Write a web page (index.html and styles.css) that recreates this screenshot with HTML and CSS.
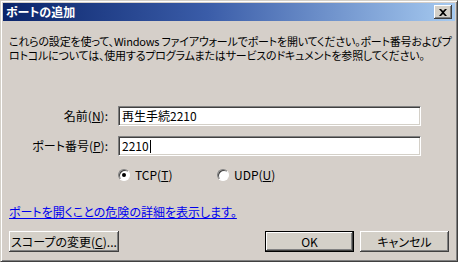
FILE: index.html
```html
<!DOCTYPE html>
<html lang="ja">
<head>
    <meta charset="UTF-8">
    <title>ポートの追加</title>
    <link rel="stylesheet" href="styles.css">
</head>
<body>
    <div class="window">
        <div class="titlebar">
            <span class="title">ポートの追加</span>
            <button class="close-btn" aria-label="閉じる">
                <svg width="8" height="7" viewBox="0 0 8 7"><path d="M0 0h2l2 2 2-2h2L5 3.5 8 7H6L4 5 2 7H0l3-3.5z" fill="#000"/></svg>
            </button>
        </div>

        <div class="content">
            <p class="intro">これらの設定を使って、Windows ファイアウォールでポートを開いてください。ポート番号およびプ<br>ロトコルについては、使用するプログラムまたはサービスのドキュメントを参照してください。</p>

            <div class="form">
                <label class="field-label" for="name">名前(<u>N</u>):</label>
                <div class="textbox" id="name">再生手続2210</div>
                <label class="field-label" for="port">ポート番号(<u>P</u>):</label>
                <div class="textbox" id="port">2210<span class="caret"></span></div>
            </div>

            <div class="protocols">
                <label class="radio"><span class="dot checked"></span>TCP(<u>T</u>)</label>
                <label class="radio"><span class="dot"></span>UDP(<u>U</u>)</label>
            </div>

            <a class="link" href="#">ポートを開くことの危険の詳細を表示します。</a>

            <div class="buttons">
                <button class="btn scope">スコープの変更(<u>C</u>)...</button>
                <span class="spacer"></span>
                <button class="btn default">OK</button>
                <button class="btn">キャンセル</button>
            </div>
        </div>
    </div>
</body>
</html>
```

FILE: styles.css
```css
html, body {
    margin: 0;
    padding: 0;
}

body {
    width: 458px;
    height: 262px;
    overflow: hidden;
    font-family: "Noto Sans CJK JP", "Liberation Sans", sans-serif;
    font-size: 12px;
    line-height: 16px;
    font-feature-settings: "palt";
    color: #000;
}

.window {
    box-sizing: border-box;
    width: 458px;
    height: 262px;
    background: #d5cfc9;
    border-top: 1px solid #d4d0c8;
    border-left: 1px solid #d4d0c8;
    border-right: 1px solid #404040;
    border-bottom: 1px solid #404040;
    box-shadow: inset 1px 1px 0 #fff, inset -1px -1px 0 #808080;
    padding: 2px;
    display: flex;
    flex-direction: column;
}

.titlebar {
    height: 18px;
    background: linear-gradient(90deg, #0a246a 0%, #3a5ca8 45%, #a6caf0 100%);
    display: flex;
    align-items: center;
    padding: 0 2px 0 3px;
}

.title {
    color: #fff;
    font-weight: bold;
    font-size: 12px;
    flex: 1;
    line-height: 18px;
}

.close-btn {
    width: 18px;
    height: 14px;
    padding: 0;
    background: #d4d0c8;
    border: none;
    box-shadow: inset -1px -1px 0 #404040, inset 1px 1px 0 #fff, inset -2px -2px 0 #808080;
    display: flex;
    align-items: center;
    justify-content: center;
    margin-right: 1px;
}

.content {
    flex: 1;
    padding: 13px 6px 0 6px;
    display: flex;
    flex-direction: column;
}

.intro {
    margin: 0;
    font-size: 11px;
    line-height: 14px;
    white-space: nowrap;
    letter-spacing: -0.2px;
}

.form {
    margin-top: 44px;
    display: grid;
    grid-template-columns: 99px 303px;
    column-gap: 10px;
    row-gap: 10px;
    align-items: center;
}

.field-label {
    text-align: right;
}

.textbox {
    box-sizing: border-box;
    height: 20px;
    background: #fff;
    border-top: 1px solid #808080;
    border-left: 1px solid #808080;
    border-right: 1px solid #fff;
    border-bottom: 1px solid #fff;
    box-shadow: inset 1px 1px 0 #404040, inset -1px -1px 0 #d4d0c8;
    padding: 0 3px;
    line-height: 18px;
    display: flex;
    align-items: center;
}

.caret {
    display: inline-block;
    width: 1px;
    height: 13px;
    background: #000;
    margin-left: 1px;
}

.protocols {
    display: flex;
    margin-top: 11px;
    padding-left: 109px;
}

.radio {
    display: flex;
    align-items: center;
    width: 99px;
}

.dot {
    box-sizing: border-box;
    width: 12px;
    height: 12px;
    border-radius: 50%;
    background: #fff;
    border: 1px solid #808080;
    border-right-color: #fff;
    border-bottom-color: #fff;
    box-shadow: inset 1px 1px 0 #404040;
    margin-right: 5px;
    position: relative;
}

.dot.checked::after {
    content: '';
    position: absolute;
    left: 3px;
    top: 3px;
    width: 4px;
    height: 4px;
    border-radius: 50%;
    background: #000;
}

.link {
    margin-top: 21px;
    color: #0000ee;
    align-self: flex-start;
}

.buttons {
    display: flex;
    margin-top: 11px;
    gap: 6px;
}

.spacer {
    flex: 1;
}

.btn {
    box-sizing: border-box;
    height: 21px;
    width: 89px;
    padding: 0;
    font: inherit;
    font-feature-settings: "palt";
    background: #d4d0c8;
    border: none;
    box-shadow: inset -1px -1px 0 #404040, inset 1px 1px 0 #fff, inset -2px -2px 0 #808080;
}

.btn.scope {
    width: 110px;
}

.btn.default {
    box-shadow: inset 0 0 0 1px #000, inset -2px -2px 0 #404040, inset 2px 2px 0 #fff, inset -3px -3px 0 #808080;
}
```
